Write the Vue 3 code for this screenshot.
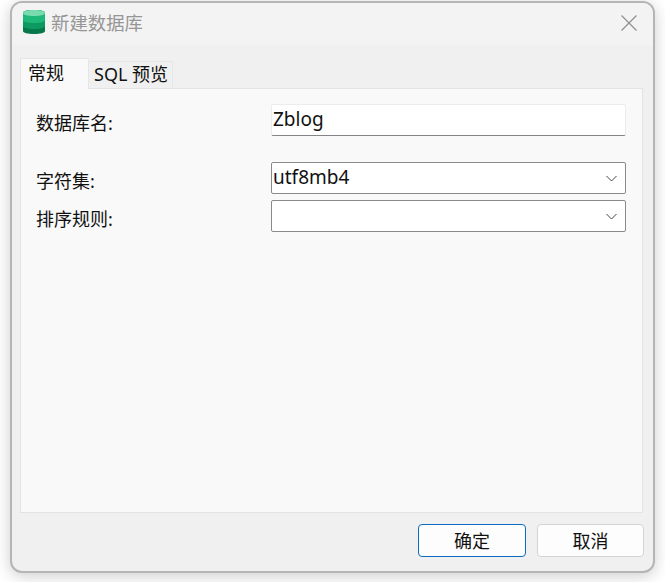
<script setup>
const rows = [
  { label: '字符集:', value: 'utf8mb4' },
  { label: '排序规则:', value: '' },
]
</script>

<template>
  <div class="page">
    <div class="window">
      <header class="titlebar">
        <svg class="logo" width="22" height="24" viewBox="0 0 22 24">
          <path d="M0 3C0 1.200 4.500 0 11 0s11 1.200 11 3v18c0 1.800-4.500 3-11 3S0 22.800 0 21z" fill="#06784a" />
          <path d="M0 3C0 1.200 4.500 0 11 0s11 1.200 11 3v13c0 1.800-4.500 3-11 3S0 17.800 0 16z" fill="#0c9a60" />
          <path d="M0 3C0 1.200 4.500 0 11 0s11 1.200 11 3v7c0 1.800-4.500 3-11 3S0 11.800 0 10z" fill="#1eb878" />
          <path d="M0 3C0 1.200 4.500 0 11 0s11 1.200 11 3-4.500 3-11 3S0 4.800 0 3z" fill="#78dcae" />
        </svg>
        <span class="title">新建数据库</span>
        <svg class="close" width="16" height="16" viewBox="0 0 16 16">
          <path d="M.5.500l15 15M15.500.500l-15 15" stroke="#8f8f8f" stroke-width="1.200" fill="none" />
        </svg>
      </header>
      <div class="body">
        <div class="tabs">
          <div class="tab active">常规</div>
          <div class="tab">SQL 预览</div>
        </div>
        <div class="pane">
          <div class="row first">
            <label class="label">数据库名:</label>
            <div class="input">Zblog</div>
          </div>
          <div class="row" v-for="r in rows" :key="r.label">
            <label class="label">{{ r.label }}</label>
            <div class="select">
              <span>{{ r.value }}</span>
              <svg width="11" height="7" viewBox="0 0 11 7">
                <path d="M.5 1l5 5 5-5" stroke="#444" stroke-width="1" fill="none" />
              </svg>
            </div>
          </div>
        </div>
        <div class="footer">
          <button class="btn primary">确定</button>
          <button class="btn">取消</button>
        </div>
      </div>
    </div>
  </div>
</template>

<style>
html, body { margin: 0; background: #fff; }
</style>

<style scoped>
.page {
  width: 665px;
  height: 582px;
  box-sizing: border-box;
  padding: 1px 10px 9px 10px;
  overflow: hidden;
  font-family: "Noto Sans", "Noto Sans CJK SC", sans-serif;
  color: #111;
}
.window {
  height: 572px;
  box-sizing: border-box;
  border: 2px solid #b5b5b5;
  border-radius: 12px;
  background: #f0f0f0;
  box-shadow: 0 3px 16px rgba(0, 0, 0, .2);
  overflow: hidden;
  display: flex;
  flex-direction: column;
}
.titlebar {
  height: 42px;
  flex: none;
  background: #f3f3f3;
  display: flex;
  align-items: center;
  padding: 0 16px 0 11px;
}
.logo { flex: none; margin-top: -4px; }
.title {
  margin-left: 6px;
  font-size: 18.400px;
  line-height: 24px;
  margin-top: -2px;
  color: #969696;
  flex: 1;
}
.close { margin-top: -3px; }
.body {
  flex: 1;
  display: flex;
  flex-direction: column;
  padding: 13px 10px 0 8px;
}
.tabs {
  display: flex;
  align-items: flex-end;
  height: 31px;
  flex: none;
  margin-bottom: -1px;
  position: relative;
  z-index: 1;
}
.tab {
  height: 28px;
  line-height: 25px;
  box-sizing: border-box;
  border: 1px solid #e6e6e6;
  border-left: 0;
  border-bottom-color: #e3e3e3;
  padding: 0 2px 0 5px;
  width: 84px;
  font-size: 18px;
  background: #f0f0f0;
  white-space: nowrap;
}
.tab.active {
  height: 31px;
  line-height: 28px;
  width: 69px;
  border-left: 1px solid #e6e6e6;
  border-bottom: 0;
  padding-left: 7px;
  background: #f9f9f9;
}
.pane {
  height: 425px;
  flex: none;
  box-sizing: border-box;
  background: #f9f9f9;
  border: 1px solid #e3e3e3;
  padding: 15px 16px 0 15px;
}
.row {
  display: flex;
  align-items: center;
  height: 32px;
  margin-bottom: 6px;
}
.row.first { margin-bottom: 26px; }
.label {
  width: 235px;
  flex: none;
  font-size: 18px;
  padding-top: 4px;
}
.input, .select {
  flex: 1;
  height: 32px;
  box-sizing: border-box;
  background: #fff;
  font-size: 19px;
  border-radius: 2px;
  padding: 0 8px 0 1px;
}
.input {
  border: 1px solid #ececec;
  border-bottom-color: #858585;
  line-height: 28px;
}
.select {
  border: 1px solid #8a8a8a;
  display: flex;
  align-items: center;
  justify-content: space-between;
}
.select span { margin-top: -2px; }
.footer {
  flex: 1;
  display: flex;
  justify-content: flex-end;
  gap: 11px;
  padding: 11px 0 0;
  margin-right: -1px;
}
.btn {
  width: 108px;
  height: 33px;
  box-sizing: border-box;
  background: #fdfdfd;
  border: 1px solid #d4d4d4;
  border-radius: 4px;
  font: inherit;
  font-size: 18px;
  line-height: 1;
  color: #111;
  padding: 0;
}
.btn + .btn { width: 107px; }
.btn.primary { border-color: #0a6cc0; }
</style>
